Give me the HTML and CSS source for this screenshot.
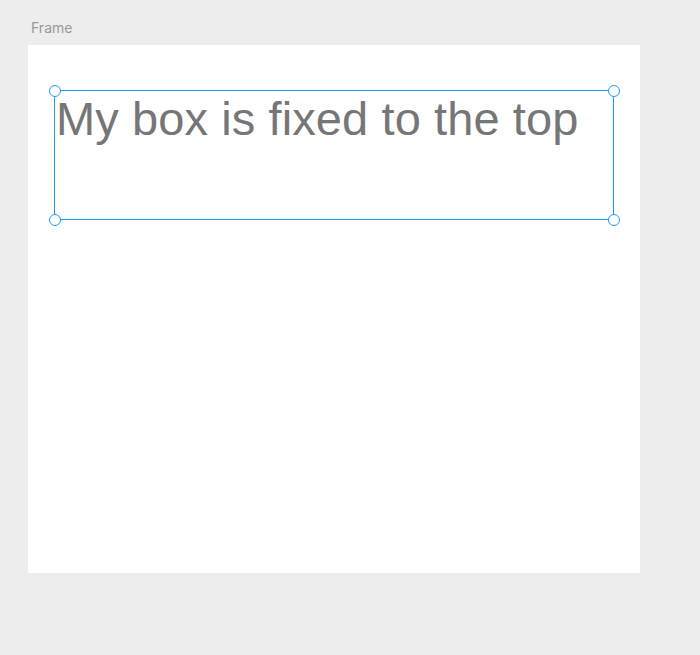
FILE: index.html
```html
<!DOCTYPE html>
<html>
<head>
<meta charset="utf-8">
<link rel="stylesheet" href="styles.css">
</head>
<body>
<div class="canvas">
  <div class="frame-label">Frame</div>
  <div class="frame">
    <div class="textbox">
      <span class="text">My box is fixed to the top</span>
      <span class="handle tl"></span>
      <span class="handle tr"></span>
      <span class="handle bl"></span>
      <span class="handle br"></span>
    </div>
  </div>
</div>
</body>
</html>
```
FILE: styles.css
```css
html, body {
  margin: 0;
  padding: 0;
  background: #ededed;
  width: 700px;
  height: 655px;
  overflow: hidden;
}
.canvas {
  padding: 20px 0 0 28px;
}
.frame-label {
  font-family: "Inter", "Liberation Sans", sans-serif;
  font-size: 14px;
  color: #999999;
  line-height: 16px;
  padding-left: 3px;
  height: 25px;
}
.frame {
  width: 612px;
  height: 528px;
  background: #ffffff;
  box-sizing: border-box;
  padding: 45px 0 0 26px;
}
.textbox {
  position: relative;
  width: 560px;
  height: 130px;
  box-sizing: border-box;
  border: 1px solid #1a9cfb;
}
.text {
  display: block;
  font-family: "Liberation Sans", Arial, sans-serif;
  font-size: 47px;
  line-height: 56px;
  letter-spacing: 0.1px;
  color: #767676;
  padding-left: 1px;
  white-space: nowrap;
}
.handle {
  position: absolute;
  width: 12px;
  height: 12px;
  box-sizing: border-box;
  border: 1.5px solid #1a9cfb;
  border-radius: 50%;
  background: #ffffff;
}
.tl { left: -6.5px; top: -6.5px; }
.tr { right: -6.5px; top: -6.5px; }
.bl { left: -6.5px; bottom: -6.5px; }
.br { right: -6.5px; bottom: -6.5px; }
```
